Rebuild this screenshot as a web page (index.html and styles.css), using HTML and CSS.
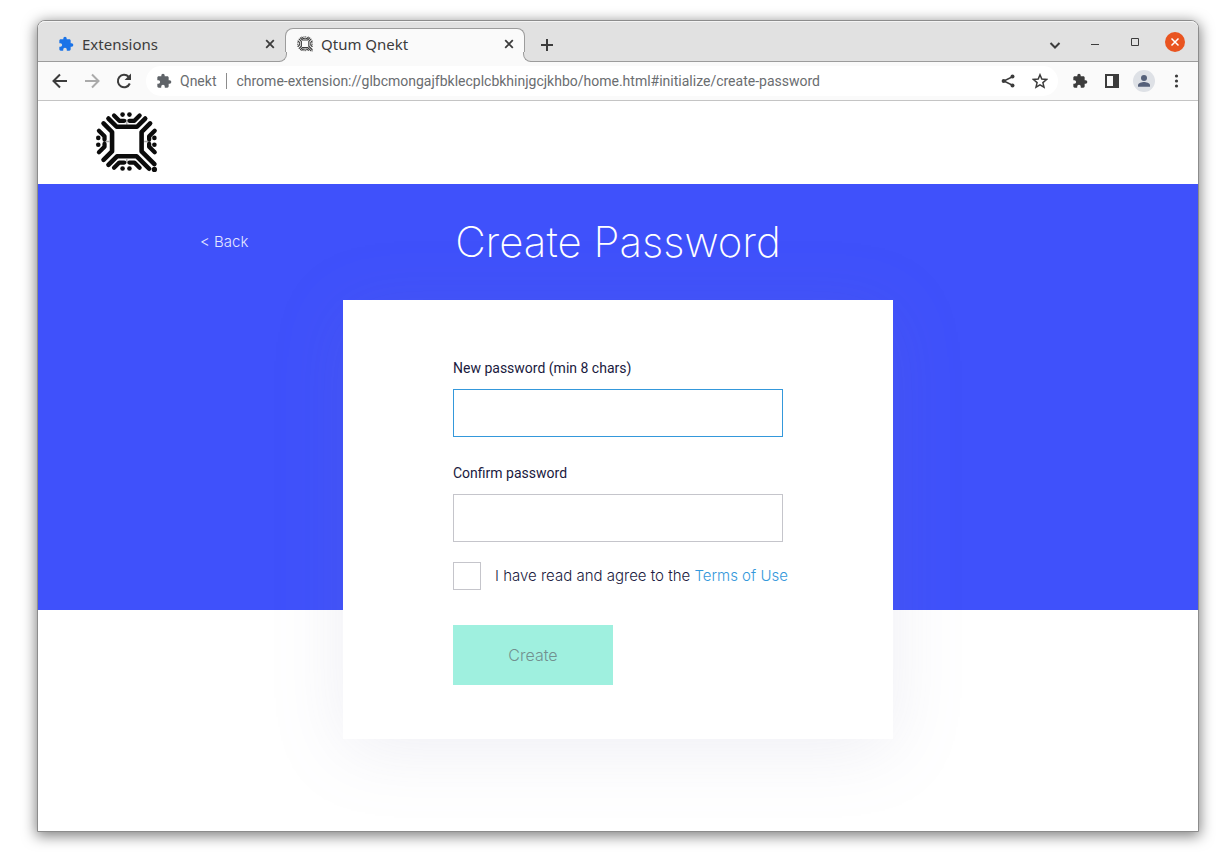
FILE: index.html
```
<!DOCTYPE html>
<html lang="en">
<head>
<meta charset="utf-8">
<title>Qtum Qnekt</title>
<link rel="stylesheet" href="styles.css">
</head>
<body>
<svg class="defs" width="0" height="0" aria-hidden="true">
  <symbol id="puzzle" viewBox="0 0 24 24"><path fill="currentColor" d="M20.5 11H19V7c0-1.1-.9-2-2-2h-4V3.500a2.500 2.500 0 0 0-5 0V5H4c-1.100 0-2 .9-2 2v3.800h1.500a2.700 2.700 0 0 1 0 5.400H2V20c0 1.100.9 2 2 2h3.800v-1.500a2.700 2.700 0 0 1 5.400 0V22H17c1.100 0 2-.9 2-2v-4h1.500a2.500 2.500 0 0 0 0-5z"/></symbol>
  <symbol id="qtum" viewBox="28 24 192 192">
    <path fill="none" stroke="#aaa" stroke-width="4" d="M125 50V66M125 170V184M52 117H72M178 117H198"/>
    <g fill="none" stroke="currentColor" stroke-width="14" stroke-linecap="round" stroke-linejoin="round">
      <path d="M69 47 94 72H156L181 47M54 62 80 88V147L54 173M69 188 95 162H155L193 200M196 62 170 88V147L209 186"/>
      <path stroke-width="13" d="M86 38 102 54H117M164 38 148 54H133M86 197 102 181H117M164 197 148 181H133M40 84 57 101V111M40 150 57 133V124M210 84 193 101V111M210 150 193 133V124"/>
    </g>
    <g fill="currentColor"><circle cx="112" cy="35" r="7"/><circle cx="133" cy="35" r="7"/><circle cx="112" cy="199" r="7"/><circle cx="133" cy="199" r="7"/><circle cx="38" cy="106" r="7"/><circle cx="38" cy="127" r="7"/><circle cx="209" cy="106" r="7"/><circle cx="209" cy="127" r="7"/><circle cx="209" cy="202" r="8"/></g>
  </symbol>
</svg>
<div class="window">
  <div class="tabstrip">
    <div class="tab">
      <svg class="i16 blue"><use href="#puzzle"/></svg>
      <span class="tab-title">Extensions</span>
      <button class="tab-close" aria-label="Close Extensions"><svg class="i10" viewBox="0 0 10 10"><path d="M1.200 1.200l7.600 7.600M8.800 1.200L1.200 8.800"/></svg></button>
    </div>
    <div class="tab active">
      <svg class="i16"><use href="#qtum"/></svg>
      <span class="tab-title">Qtum Qnekt</span>
      <button class="tab-close" aria-label="Close Qtum Qnekt"><svg class="i10" viewBox="0 0 10 10"><path d="M1.200 1.200l7.600 7.600M8.800 1.200L1.200 8.800"/></svg></button>
    </div>
    <button class="new-tab" aria-label="New tab"><svg class="i12" viewBox="0 0 12 12"><path d="M6 0v12M0 6h12"/></svg></button>
    <div class="controls">
      <button aria-label="Search tabs" class="search-tabs"><svg class="i12" viewBox="0 0 12 12"><path d="M1.500 4L6 8.500 10.500 4"/></svg></button>
      <button aria-label="Minimize" class="minimize"><svg class="i10 thin" viewBox="0 0 10 10"><path d="M1 5.500h8"/></svg></button>
      <button aria-label="Maximize"><svg class="i10 thin" viewBox="0 0 10 10"><path d="M1.500 1.500h7v7h-7z"/></svg></button>
      <button aria-label="Close window" class="close"><svg class="i10" viewBox="0 0 10 10"><path d="M1.500 1.500l7 7M8.500 1.500l-7 7"/></svg></button>
    </div>
  </div>

  <div class="toolbar">
    <div class="nav">
      <button aria-label="Back"><svg class="i20" viewBox="0 0 20 20"><path d="M17 10H4M10 3.500L3.500 10l6.500 6.500"/></svg></button>
      <button aria-label="Forward" class="disabled"><svg class="i20" viewBox="0 0 20 20"><path d="M3 10h13M10 3.500l6.500 6.500-6.500 6.500"/></svg></button>
      <button aria-label="Reload"><svg class="i20" viewBox="0 0 20 20"><path d="M15.800 12.500A6.200 6.200 0 1 1 14.600 5.800"/><path class="solid" d="M17 2.600V9h-6.400z"/></svg></button>
    </div>
    <div class="omnibox">
      <svg class="i16 grey"><use href="#puzzle"/></svg>
      <span class="site">Qnekt</span>
      <span class="url">chrome-extension://glbcmongajfbklecplcbkhinjgcjkhbo/home.html#initialize/create-password</span>
      <button aria-label="Share"><svg class="i16" viewBox="0 0 16 16"><path class="fine" d="M12.500 3.800L3.800 8l8.700 4.200"/><g class="solid"><circle cx="12.500" cy="3.600" r="2"/><circle cx="3.600" cy="8" r="2"/><circle cx="12.500" cy="12.400" r="2"/></g></svg></button>
      <button aria-label="Bookmark this page"><svg class="i16" viewBox="0 0 16 16"><path class="fine" d="M8 1.800l1.800 4.300 4.700.4-3.600 3.100 1.100 4.600L8 11.800l-4 2.400 1.100-4.600L1.500 6.500l4.700-.4z"/></svg></button>
    </div>
    <div class="actions">
      <button aria-label="Extensions"><svg class="i16"><use href="#puzzle"/></svg></button>
      <button aria-label="Side panel"><svg class="i16" viewBox="0 0 16 16"><path d="M2 2h12v12H2z"/><path class="solid" d="M9 1.500H14v13H9z"/></svg></button>
      <button aria-label="Profile"><svg class="i22" viewBox="0 0 22 22"><circle cx="11" cy="11" r="11" fill="#dee1e6"/><circle cx="11" cy="8" r="3" fill="#56617a"/><path fill="#56617a" d="M5 16.800V15c0-2 4-3.100 6-3.100s6 1.100 6 3.100v1.800z"/></svg></button>
      <button aria-label="Menu"><svg class="i16" viewBox="0 0 16 16"><g class="solid"><circle cx="8.500" cy="3" r="1.600"/><circle cx="8.500" cy="8" r="1.600"/><circle cx="8.500" cy="13" r="1.600"/></g></svg></button>
    </div>
  </div>

  <header class="site-header">
    <svg class="logo" role="img" aria-label="Qtum"><use href="#qtum"/></svg>
  </header>

  <main class="page">
    <div class="heading">
      <a class="back" href="#back">&lt; Back</a>
      <h1>Create Password</h1>
    </div>
    <form class="card">
      <div class="field">
        <label for="new-password">New password (min 8 chars)</label>
        <input class="focused" id="new-password" type="password">
      </div>
      <div class="field">
        <label for="confirm-password">Confirm password</label>
        <input id="confirm-password" type="password">
      </div>
      <div class="terms">
        <input id="terms" type="checkbox">
        <label for="terms">I have read and agree to the <a href="#terms">Terms of Use</a></label>
      </div>
      <button class="create" type="submit" disabled>Create</button>
    </form>
  </main>
</div>
</body>
</html>
```
FILE: styles.css
```
* { box-sizing: border-box; }

body {
  margin: 0;
  padding: 20px 30px 27px 37px;
  background: #fff;
  font-family: "Noto Sans", sans-serif;
}

button {
  display: flex;
  align-items: center;
  justify-content: center;
  margin: 0;
  padding: 0;
  border: 0;
  background: none;
  color: #3c3c3c;
  font: inherit;
}

svg { display: block; flex: none; }
button svg { fill: none; stroke: currentColor; stroke-width: 2; }
button use { stroke: none; }
.defs { position: absolute; }
.i10 { width: 10px; height: 10px; }
.i12 { width: 12px; height: 12px; }
.i16 { width: 16px; height: 16px; }
.i20 { width: 20px; height: 20px; }
.actions .i22 { width: 22px; height: 22px; stroke: none; }
button .thin { stroke-width: 1; }
.fine { stroke-width: 1.5; }
.solid { fill: currentColor; stroke: none; }
.blue { color: #1a73e8; }
.grey { color: #5f6368; }

.window {
  display: flex;
  flex-direction: column;
  min-height: calc(100vh - 47px);
  border: 1px solid #8c8c8c;
  border-radius: 8px 8px 0 0;
  background: #fff;
  box-shadow: 0 3px 14px 1px rgba(0, 0, 0, 0.5);
}

/* Tab strip */
.tabstrip {
  display: flex;
  align-items: flex-end;
  height: 41px;
  border-bottom: 1px solid #9c9c9c;
  border-top: 1px solid #f4f4f4;
  border-radius: 7px 7px 0 0;
  background: #e1e1e1;
}

.tab {
  display: flex;
  align-items: center;
  gap: 8px;
  width: 247px;
  height: 33px;
  padding: 0 7px 1px 20px;
  color: #3c3c3c;
  font-size: 15px;
}

.tab-title { flex: 1; white-space: nowrap; }
.tab-close { width: 16px; height: 16px; }
.tab-close svg { stroke-width: 1.8; }

.tab.active {
  position: relative;
  width: 240px;
  height: 34px;
  margin-bottom: -1px;
  padding: 0 7px 3px 11px;
  border: 1px solid #9c9c9c;
  border-bottom: 0;
  border-radius: 8px 8px 0 0;
  background: #fafafa;
}

.tab.active::before,
.tab.active::after {
  content: "";
  position: absolute;
  bottom: 0;
  width: 9px;
  height: 9px;
  border-bottom: 1px solid #9c9c9c;
  background: #e1e1e1;
}

.tab.active::before {
  left: -9px;
  border-right: 1px solid #9c9c9c;
  border-bottom-right-radius: 8px;
  box-shadow: 3px 3px 0 #fafafa;
}

.tab.active::after {
  right: -9px;
  border-left: 1px solid #9c9c9c;
  border-bottom-left-radius: 8px;
  box-shadow: -3px 3px 0 #fafafa;
}

.new-tab { width: 28px; height: 28px; margin-left: 8px; margin-bottom: 2px; }

.controls {
  display: flex;
  align-items: center;
  gap: 20px;
  height: 38px;
  margin-left: auto;
  padding-right: 13px;
}

.controls button { width: 20px; height: 20px; }
.controls .search-tabs { align-self: flex-end; margin-bottom: 6px; }
.controls .minimize { align-self: center; padding-top: 3px; }
.controls .close { border-radius: 50%; background: #e95420; color: #fff; }
.close svg { stroke-width: 1.5; }

/* Toolbar */
.toolbar {
  display: flex;
  align-items: center;
  height: 39px;
  padding: 0 6px;
  border-bottom: 1px solid #c4c4c4;
  background: #fafafa;
}

.nav, .actions { display: flex; }
.nav button, .actions button, .omnibox button { width: 32px; height: 30px; }
.nav .disabled { color: #aaa; }

.omnibox {
  display: flex;
  flex: 1;
  align-items: center;
  min-width: 0;
  height: 30px;
  margin: 0 6px;
  padding: 0 2px 0 10px;
  border-radius: 15px;
  background: #fff;
  color: #6a6d70;
  font-family: Roboto, sans-serif;
  font-size: 14px;
  line-height: 16px;
}

.site { margin-left: 8px; padding-right: 10px; border-right: 1px solid #8c8c8c; }
.url { flex: 1; min-width: 0; margin-left: 9px; overflow: hidden; line-height: 24px; white-space: nowrap; }

/* Page */
.site-header { padding: 10px 57px; }
.logo { width: 63px; height: 63px; color: #0c0c0c; }

.page {
  flex: 1;
  padding-bottom: 92px;
  background: linear-gradient(#3f51fb, #3f51fb) no-repeat top / 100% 426px;
}

.heading {
  display: grid;
  grid-template-columns: 1fr auto 1fr;
  align-items: center;
  max-width: 836px;
  height: 116px;
  margin: 0 auto;
  padding-bottom: 2px;
  font-family: Inter, sans-serif;
  font-weight: 300;
}

.back { color: #e3e6ff; font-size: 15px; text-decoration: none; }

h1 {
  margin: 0;
  color: #fff;
  font-size: 42px;
  font-weight: 200;
}

.card {
  max-width: 550px;
  margin: 0 auto;
  padding: 58px 110px 54px;
  background: #fff;
  box-shadow: 0 10px 70px rgba(120, 125, 170, 0.13);
}

.field { margin-bottom: 26px; }

.field label {
  display: block;
  margin-bottom: 11px;
  color: #1a1a40;
  font: 400 14px/20px Roboto, sans-serif;
}

.field input {
  display: block;
  width: 100%;
  height: 48px;
  padding: 0 12px;
  border: 1px solid #c5c5cb;
  background: #fff;
  font: 16px Roboto, sans-serif;
  outline: 0;
}

.field .focused { border-color: #3498db; }

.terms {
  display: flex;
  align-items: center;
  gap: 14px;
  margin-top: -6px;
  color: #1a1a40;
  font: 300 15px/20px Inter, sans-serif;
}

.terms input {
  flex: none;
  width: 28px;
  height: 28px;
  margin: 0;
  border: 1px solid #c5c5cb;
  background: #fff;
  appearance: none;
}

.terms label { white-space: nowrap; }
.terms a { color: #3498db; text-decoration: none; }

.create {
  width: 160px;
  height: 60px;
  margin-top: 35px;
  background: #9ff0df;
  color: #72908f;
  font: 300 16px/20px Inter, sans-serif;
}
```
